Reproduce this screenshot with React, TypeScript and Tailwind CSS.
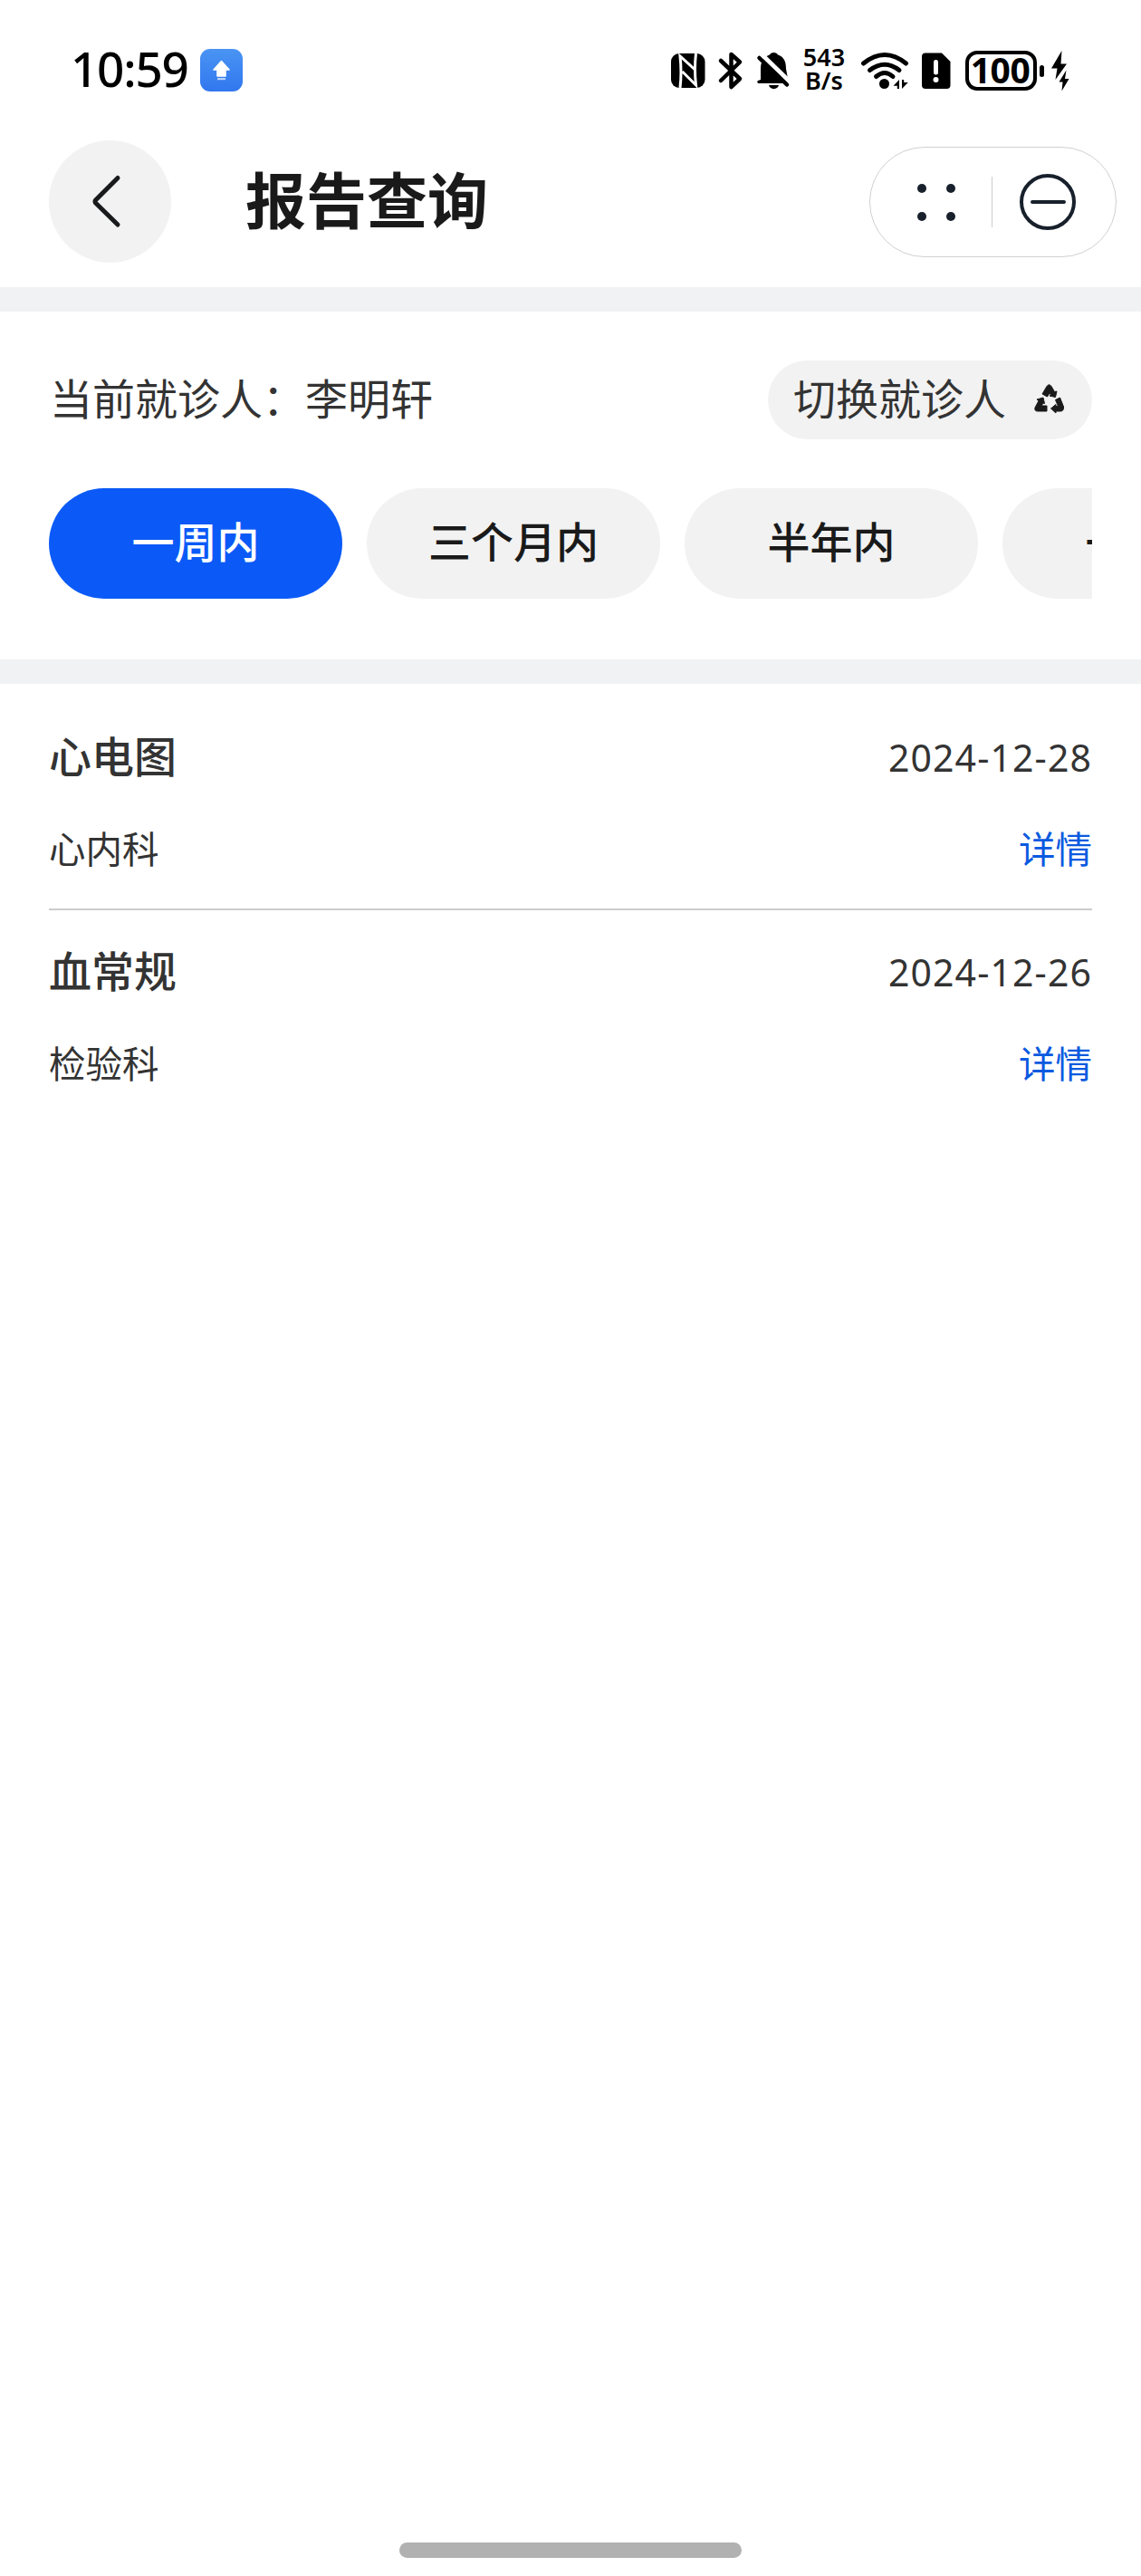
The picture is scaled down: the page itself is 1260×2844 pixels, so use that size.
import { useState } from "react";

const tabs = ["一周内", "三个月内", "半年内", "一年内"];

const reports = [
  { name: "心电图", date: "2024-12-28", dept: "心内科" },
  { name: "血常规", date: "2024-12-26", dept: "检验科" },
];

function StatusBar() {
  return (
    <div className="flex h-[155px] shrink-0 items-start pl-[78px] pt-[54px]">
      <div className="flex h-[42px] w-[143px] items-center whitespace-nowrap font-['Noto_Sans'] text-[53px] font-medium leading-none tracking-[-1.2px] text-black">
        10:59
      </div>
      <svg className="h-[47px] w-[47px]" viewBox="0 0 47 47">
        <defs>
          <linearGradient id="app" x1="0" y1="0" x2="0" y2="1">
            <stop offset="0" stopColor="#4a94f3" />
            <stop offset="1" stopColor="#3177ef" />
          </linearGradient>
        </defs>
        <rect width="47" height="47" rx="11" fill="url(#app)" />
        <path
          d="M23.5 13.5 32 23H28V30H19V23H15Z"
          fill="#fff"
          stroke="#fff"
          strokeWidth="1.6"
          strokeLinejoin="round"
        />
        <path d="M19 33.2H28" stroke="#c5dbfb" strokeWidth="2" />
      </svg>

      <svg className="ml-[467px] h-[50px] w-[150px]" viewBox="735 54 150 50">
        {/* nfc */}
        <rect x="741" y="59" width="37.5" height="38" rx="9" />
        <path
          d="M751 97Q753 80 751 62L767.5 77M768.5 59Q766.5 76 768.5 94L753.5 79"
          fill="none"
          stroke="#fff"
          strokeWidth="3"
        />
        {/* bluetooth */}
        <path
          d="M796 67 817 87 807.5 96V60L817 68.5 796 89"
          fill="none"
          stroke="#000"
          strokeWidth="4.5"
          strokeLinecap="round"
          strokeLinejoin="round"
        />
        {/* silent */}
        <path d="M840 88V76C840 66 845 62 850 60.5C851 57 858 57 859 60.5C866 63 868 68 868 76L871 92H838C836 92 836 89.5 837 89Z" />
        <path d="M849 94H860C859 99.5 850 99.5 849 94Z" />
        <path d="M841 60 875 93" stroke="#fff" strokeWidth="5" />
        <path
          d="M838.5 64 869 93.5"
          stroke="#000"
          strokeWidth="4.5"
          strokeLinecap="round"
        />
      </svg>

      <div className="-mt-[4px] flex w-[50px] flex-col items-center font-['Noto_Sans'] text-[27px] font-semibold leading-[26px] text-black">
        <span className="h-[26px]">543</span>
        <span className="h-[26px]">B/s</span>
      </div>

      <svg className="ml-[11px] h-[50px] w-[110px]" viewBox="946 54 110 50">
        <g fill="none" stroke="#000" strokeWidth="5" strokeLinecap="round">
          <path d="M953.5 70Q977 51 1000.5 70" />
          <path d="M960.5 77.5Q977 65 993 77.5" />
          <path d="M967.5 84.5Q977 76.5 986 84.5" />
        </g>
        <circle cx="976.5" cy="92.5" r="5.5" />
        <path d="M993 88V98H990.8V94.8H986.5ZM996 98V88H998.2V91H1002.8Z" />
        <path d="M1022 58.5H1040L1049.5 68V94Q1049.5 98 1045.5 98H1022Q1018 98 1018 94V62.5Q1018 58.5 1022 58.5Z" />
        <path
          d="M1033.5 68.5V80"
          stroke="#fff"
          strokeWidth="5"
          strokeLinecap="round"
        />
        <circle cx="1033.5" cy="88" r="3" fill="#fff" />
      </svg>

      <div className="ml-[10px] mt-[2px] flex h-11 w-[79px] items-center justify-center rounded-[13px] border-4 border-black pb-[4px] pr-[2px] font-['Noto_Sans'] text-[39px] font-bold leading-none tracking-[-0.5px] text-black">
        100
      </div>
      <div className="ml-[3px] mt-[18px] h-[13px] w-[5px] rounded-full bg-black" />
      <svg className="ml-[6px] h-[50px] w-[24px]" viewBox="1159 54 24 50">
        <path d="M1172.5 56 1161 75.5H1167.5L1165.5 88 1178 70.5H1171.5Z" />
        <path d="M1177.5 77.5 1169.5 90.5H1173.5L1172.5 100.5 1180.5 87H1176Z" />
      </svg>
    </div>
  );
}

function Header() {
  return (
    <header className="flex h-[162px] shrink-0 items-start pl-[54px] pr-[27px]">
      <button className="flex h-[135px] w-[135px] items-center justify-center rounded-full bg-[#f2f2f2]">
        <svg className="h-[135px] w-[135px]" viewBox="0 0 135 135">
          <path
            d="M76 41.5 51.5 66Q50.5 67.5 51.5 69L76 93"
            fill="none"
            stroke="#191a1c"
            strokeWidth="5"
            strokeLinecap="round"
            strokeLinejoin="round"
          />
        </svg>
      </button>
      <h1 className="ml-[82px] text-[67px] font-bold leading-[125px] text-[#1a1a1a]">
        报告查询
      </h1>
      <div className="ml-auto mt-[7px] flex h-[122px] w-[273px] items-center rounded-full border border-[#d0d0d0]">
        <div className="grid grid-cols-2 gap-x-[22px] gap-y-[21px] pl-[52px]">
          <i className="h-[10px] w-[10px] rounded-full bg-[#17202b]" />
          <i className="h-[10px] w-[10px] rounded-full bg-[#17202b]" />
          <i className="h-[10px] w-[10px] rounded-full bg-[#17202b]" />
          <i className="h-[10px] w-[10px] rounded-full bg-[#17202b]" />
        </div>
        <div className="ml-[40px] h-[56px] w-px bg-[#ccc]" />
        <div className="ml-[30px] flex h-[62px] w-[62px] items-center justify-center rounded-full border-4 border-[#17202b]">
          <div className="h-[4px] w-[39px] rounded-full bg-[#17202b]" />
        </div>
      </div>
    </header>
  );
}

function RecycleIcon() {
  return (
    <svg
      className="mb-[3px] h-[34px] w-[34px]"
      viewBox="0 0 34 34"
      fill="#1a1a1a"
      stroke="#1a1a1a"
      strokeLinejoin="round"
    >
      <path d="M9 12 14 3.5Q16.500 0 19 3.500L22.500 9.500 25 9 23.500 15.500 17 14 18.500 13 17 11 14.500 15Z" />
      <path d="M3 18 10 16 11.500 22.500 9.500 22 8.500 25H14V31H4Q0 31 1 27L5 19.5Z" />
      <path d="M23.500 18.500 28.500 16 32.500 26Q33 31 29 31H24V33L18.500 28 24 23.500V25.500H26.500Z" />
    </svg>
  );
}

export default function App() {
  const [active, setActive] = useState(0);

  return (
    <div className="flex h-[2844px] w-[1260px] flex-col overflow-hidden bg-white font-['Noto_Sans_CJK_SC',sans-serif]">
      <StatusBar />
      <Header />
      <div className="h-[27px] shrink-0 bg-[#f1f2f4]" />

      <section className="h-[384px] shrink-0 px-[54px] pt-[54px]">
        <div className="flex h-[87px] items-center justify-between text-[47px] text-[#333]">
          <span className="pb-[7px] pl-px leading-[80px]">
            当前就诊人：李明轩
          </span>
          <button className="flex h-[87px] items-center rounded-full bg-[#f2f2f2] pl-[28px] pr-[30px]">
            <span className="mr-[31px] pb-[7px] leading-[80px]">切换就诊人</span>
            <RecycleIcon />
          </button>
        </div>
        <div className="mt-[54px] flex gap-[27px] overflow-hidden">
          {tabs.map((tab, i) => (
            <button
              key={tab}
              onClick={() => setActive(i)}
              className={`h-[122px] w-[324px] shrink-0 rounded-full pb-[7px] text-[47px] font-medium ${
                i === active
                  ? "bg-[#0b5af7] text-white"
                  : "bg-[#f2f2f2] text-[#1a1a1a]"
              }`}
            >
              {tab}
            </button>
          ))}
        </div>
      </section>
      <div className="h-[27px] shrink-0 bg-[#f1f2f4]" />

      <ul className="px-[54px] pt-[13px] text-[#333]">
        {reports.map((report) => (
          <li
            key={report.name}
            className="h-[237px] border-b-2 border-[#ccc] pt-[27px] last:border-0"
          >
            <div className="flex h-[80px] items-center justify-between">
              <span className="pb-[4px] text-[47px] font-medium">
                {report.name}
              </span>
              <span className="pt-[4px] font-['Noto_Sans'] text-[41px] tracking-[1.1px]">
                {report.date}
              </span>
            </div>
            <div className="mt-[26px] flex h-[70px] items-center justify-between text-[40.5px]">
              <span>{report.dept}</span>
              <a className="text-[#0b5ae0]">详情</a>
            </div>
          </li>
        ))}
      </ul>

      <div className="mx-auto mb-[20px] mt-auto h-[17px] w-[378px] rounded-full bg-[#b1b1b1]" />
    </div>
  );
}
